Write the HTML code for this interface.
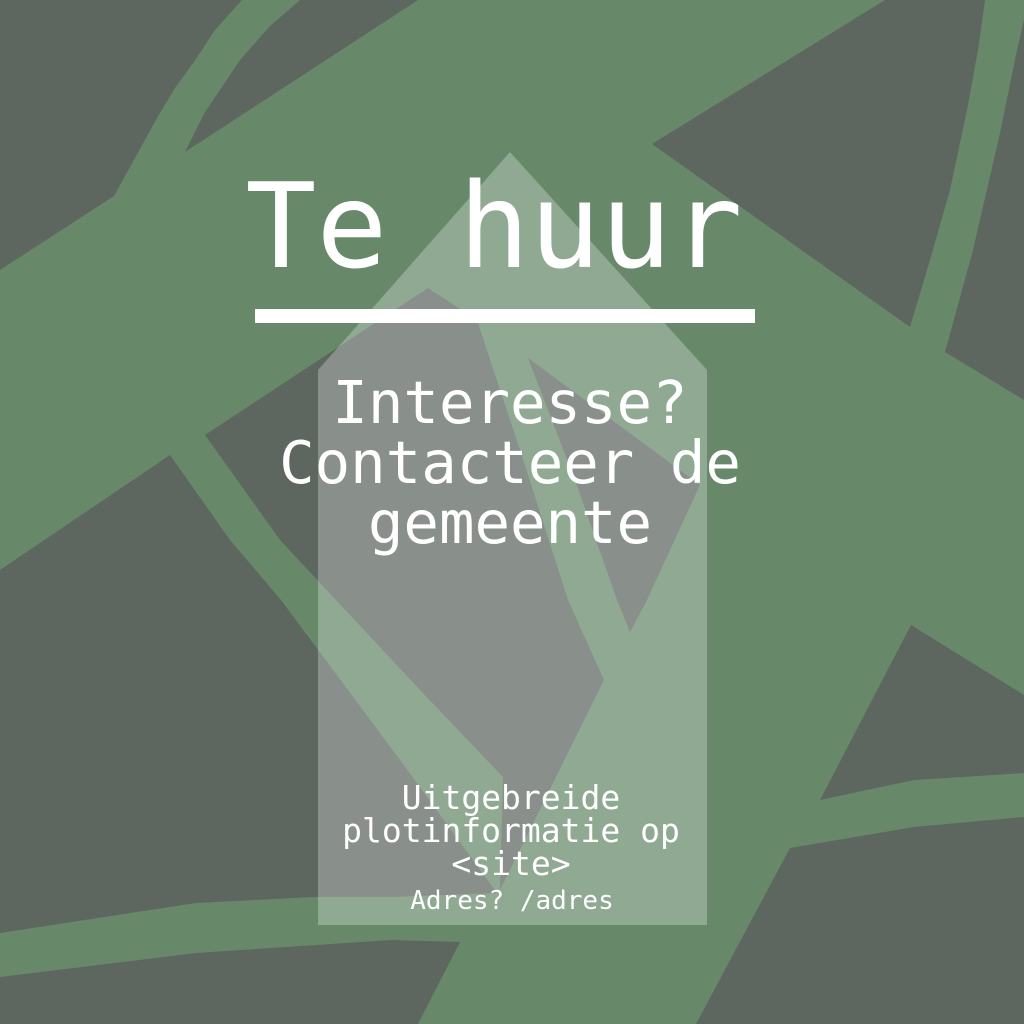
<!DOCTYPE html>
<html><head><meta charset="utf-8"><style>
html,body{margin:0;padding:0;}
body{width:1024px;height:1024px;overflow:hidden;position:relative;background:#67896a;font-family:"DejaVu Sans Mono","Liberation Mono",monospace;color:#fff;}
svg{position:absolute;left:0;top:0;}
.t{position:absolute;left:0;width:1024px;text-align:center;white-space:pre;}
</style></head><body>
<svg width="1024" height="1024" viewBox="0 0 1024 1024">
<g fill="#5e6660">
<polygon points="0,0 242,0 215,30 196,59 175,88 157,118 135,158 114,196 0,270"/>
<polygon points="300,0 418,0 185,152 205,112 240,60 270,26"/>
<polygon points="652,144 885,0 985,0 978,50 967,110 950,190 930,260 910,327"/>
<polygon points="1024,20 1017,50 1000,133 973,250 945,352 1024,400"/>
<polygon points="205,435 428,288 477,320 520,450 568,600 604,680 500,890 503,777 420,690 336,600 280,540"/>
<polygon points="0,570 170,455 230,540 281,600 400,760 497,893 392,897 314,897 196,903 0,933"/>
<polygon points="528,358 700,485 647,600 630,632 617,600 575,480"/>
<polygon points="0,977 196,953 392,940 460,942 418,1024 0,1024"/>
<polygon points="790,848 914,827 1024,817 1024,1024 696,1024"/>
<polygon points="911,625 1024,695 1024,773 914,780 820,800"/>
</g>
<polygon points="318,370 510,152 707,370 707,925 318,925" fill="#fff" fill-opacity="0.27"/>
<rect x="255" y="309" width="500" height="14" fill="#fff"/>
</svg>
<div class="t" style="top:167px;font-size:118px;line-height:118px;left:-18px;">Te huur</div>
<div class="t" style="top:373px;font-size:59px;line-height:60px;left:-2px;">Interesse?
Contacteer de
gemeente</div>
<div class="t" style="top:781px;font-size:33px;line-height:33px;left:-1px;">Uitgebreide
plotinformatie op
&lt;site&gt;</div>
<div class="t" style="top:888px;font-size:26px;line-height:26px;">Adres? /adres</div>
</body></html>
